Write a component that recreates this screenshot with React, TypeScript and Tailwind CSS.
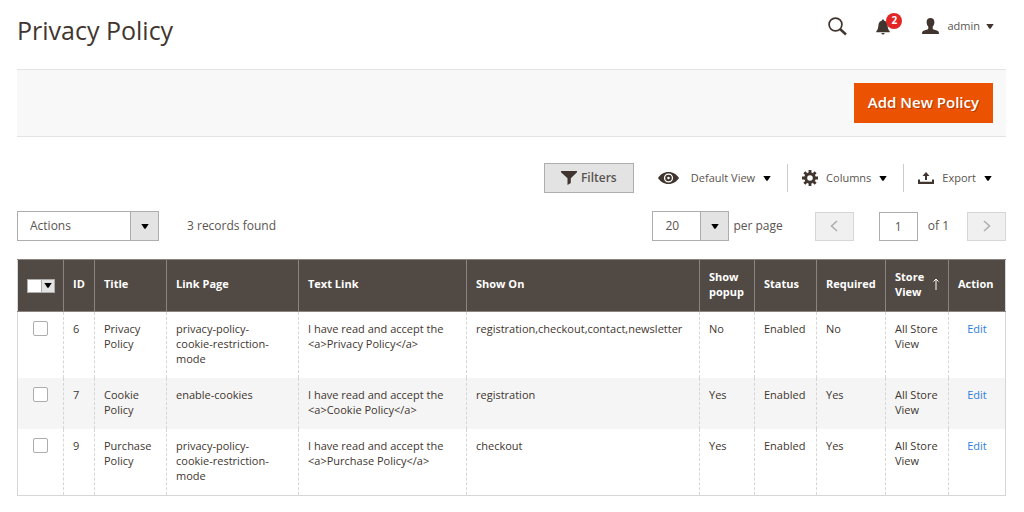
import { useState } from 'react';
import type { ReactNode } from 'react';

// ── Icons ─────────────────────────────────────────────────────────────────────

function SearchIcon() {
  return (
    <svg viewBox="0 0 20 20" fill="none" stroke="currentColor" aria-hidden="true" className="h-5 w-5">
      <circle cx="7.5" cy="8.5" r="6.4" strokeWidth="1.7" />
      <path d="M12 13l6 5.5" strokeWidth="2.4" />
    </svg>
  );
}

function BellIcon() {
  return (
    <svg viewBox="0 0 14 16" fill="currentColor" aria-hidden="true" className="h-4 w-3.5">
      <path d="M7 0.5c.8 0 1.2.5 1.2 1.2 2.2.5 3.2 2.2 3.4 4.6.2 3.2.8 4.7 2.2 6.2v.7H.2v-.7c1.4-1.5 2-3 2.2-6.2C2.6 3.9 3.6 2.2 5.8 1.7 5.8 1 6.2.5 7 .5z" />
      <path d="M5.3 14h3.4c-.2.9-.8 1.5-1.7 1.5S5.5 14.9 5.3 14z" />
    </svg>
  );
}

function UserIcon() {
  return (
    <svg viewBox="0 0 17 16" fill="currentColor" aria-hidden="true" className="h-4 w-[17px]">
      <path d="M8.5 0c2.4 0 3.9 1.5 3.9 4 0 1.9-.7 3.7-1.7 4.8v1.5c0 .6.3.9.9 1.1l3.3 1.1c1.400.5 2.1 1.3 2.1 3.5H0c0-2.200.7-3 2.1-3.5l3.3-1.100c.6-.2.9-.5.9-1.1V8.800C5.300 7.700 4.600 5.900 4.600 4c0-2.500 1.500-4 3.900-4z" />
    </svg>
  );
}

function FunnelIcon() {
  return (
    <svg viewBox="0 0 16 14" fill="currentColor" aria-hidden="true" className="h-3.5 w-4">
      <path d="M0 0h16v1.3L9.8 7.3V12L6.5 14V7.3L0 1.3z" />
    </svg>
  );
}

function EyeIcon() {
  return (
    <svg viewBox="0 0 21 12" aria-hidden="true" className="mr-1 h-3 w-[21px]">
      <path
        fill="currentColor"
        fillRule="evenodd"
        d="M10.5 0C15.2 0 18.9 2.6 21 6c-2.1 3.4-5.8 6-10.5 6S2.1 9.4 0 6c2.1-3.4 5.8-6 10.5-6zM10.5 1.4a4.6 4.6 0 1 0 0 9.2 4.6 4.6 0 0 0 0-9.2z"
      />
      <path
        fill="currentColor"
        fillRule="evenodd"
        d="M10.5 2.7a3.3 3.3 0 1 1 0 6.6 3.3 3.3 0 0 1 0-6.6zM10.5 4.7a1.3 1.3 0 1 0 0 2.6 1.3 1.3 0 0 0 0-2.6z"
      />
    </svg>
  );
}

function GearIcon() {
  return (
    <svg viewBox="0 0 16 16" fill="none" stroke="currentColor" aria-hidden="true" className="h-4 w-4">
      <circle cx="8" cy="8" r="4.3" strokeWidth="3" />
      <path
        d="M8 0v3M8 13v3M0 8h3M13 8h3M2.35 2.35l2 2M11.65 11.65l2 2M2.35 13.65l2-2M11.65 4.35l2-2"
        strokeWidth="2.8"
      />
    </svg>
  );
}

function ExportIcon() {
  return (
    <svg viewBox="0 0 16 12" fill="currentColor" aria-hidden="true" className="h-3 w-4">
      <path d="M8 0l3.5 4H9v4H7V4H4.5z" />
      <path d="M0 7.5h2v2.3h12V7.5h2V12H0z" />
    </svg>
  );
}

function CaretIcon() {
  return (
    <svg viewBox="0 0 8 5" fill="currentColor" aria-hidden="true" className="h-[5px] w-2 shrink-0">
      <path d="M0.3 0h7.4L4.6 4.7H3.4z" />
    </svg>
  );
}

function ChevronIcon({ direction }: { direction: 'left' | 'right' }) {
  return (
    <svg viewBox="0 0 8 12" fill="none" stroke="currentColor" strokeWidth="1.5" aria-hidden="true" className="h-3 w-2">
      <path d={direction === 'left' ? 'M7 1L1.5 6L7 11' : 'M1 1l5.5 5L1 11'} />
    </svg>
  );
}

// ── Data ──────────────────────────────────────────────────────────────────────

const policies = [
  {
    id: 6,
    title: 'Privacy Policy',
    linkPage: 'privacy-policy-cookie-restriction-mode',
    textLink: 'I have read and accept the <a>Privacy Policy</a>',
    showOn: 'registration,checkout,contact,newsletter',
    popup: 'No',
    status: 'Enabled',
    required: 'No',
    store: 'All Store View',
  },
  {
    id: 7,
    title: 'Cookie Policy',
    linkPage: 'enable-cookies',
    textLink: 'I have read and accept the <a>Cookie Policy</a>',
    showOn: 'registration',
    popup: 'Yes',
    status: 'Enabled',
    required: 'Yes',
    store: 'All Store View',
  },
  {
    id: 9,
    title: 'Purchase Policy',
    linkPage: 'privacy-policy-cookie-restriction-mode',
    textLink: 'I have read and accept the <a>Purchase Policy</a>',
    showOn: 'checkout',
    popup: 'Yes',
    status: 'Enabled',
    required: 'Yes',
    store: 'All Store View',
  },
];

// ── Small parts ───────────────────────────────────────────────────────────────

function ToolbarMenu({ icon, label }: { icon: ReactNode; label: string }) {
  return (
    <button
      type="button"
      className="flex h-7 items-center gap-2 pr-4 pl-3.5 text-[11px] text-[#5a5450] last:pr-3.5"
    >
      <span className="text-[#41362f]">{icon}</span>
      {label}
      <span className="text-black">
        <CaretIcon />
      </span>
    </button>
  );
}

function SelectBox({ label, options, className }: { label: string; options: string[]; className: string }) {
  return (
    <div className={`relative ${className}`}>
      <select
        aria-label={label}
        className="h-full w-full appearance-none border border-[#adadad] bg-white pr-7 pl-3 text-[#5a5450]"
      >
        {options.map((o) => (
          <option key={o}>{o}</option>
        ))}
      </select>
      <span className="pointer-events-none absolute inset-y-0 right-0 flex w-[29px] items-center justify-center border border-[#adadad] bg-[#e3e3e3] text-black">
        <CaretIcon />
      </span>
    </div>
  );
}

const headCell = 'border-l border-[#8a837f] px-[9px] pb-1 text-left font-bold first:border-l-0 first:pb-0';
const bodyCell = 'border-l border-dashed border-[#d6d6d6] pt-[9px] pb-3 pl-[9px] align-top first:border-l-0';

// ── Page ──────────────────────────────────────────────────────────────────────

export default function App() {
  const [selected, setSelected] = useState<number[]>([]);
  const [page, setPage] = useState('1');

  const toggle = (id: number) =>
    setSelected((ids) => (ids.includes(id) ? ids.filter((i) => i !== id) : [...ids, id]));

  return (
    <div className="min-h-screen bg-white pr-[18px] pb-4 pl-[17px] font-['Open_Sans',sans-serif] text-xs text-[#41362f]">
      <header className="flex h-[69px] items-start justify-between pt-3">
        <h1 className="text-[25px] leading-9">Privacy Policy</h1>
        <div className="flex h-7 items-center pr-3">
          <button type="button" aria-label="Search">
            <SearchIcon />
          </button>
          <button type="button" aria-label="Notifications" className="relative ml-7 pt-0.5">
            <BellIcon />
            <span className="absolute -top-1 left-2.5 flex h-4 w-4 items-center justify-center rounded-full bg-[#e22626] text-[10px] font-bold text-white">
              2
            </span>
          </button>
          <button type="button" className="ml-8 flex items-center gap-2 text-[11px] text-[#5a5450]">
            <span className="text-[#41362f]">
              <UserIcon />
            </span>
            <span className="flex items-center gap-1.5">
              admin
              <span className="text-[#41362f]">
                <CaretIcon />
              </span>
            </span>
          </button>
        </div>
      </header>

      <div className="flex justify-end border-y border-[#e3e3e3] bg-[#f8f8f8] px-[13px] py-[13px]">
        <button
          type="button"
          className="h-10 bg-[#eb5202] px-3.5 pb-0.5 text-[15px] font-semibold text-white [text-shadow:1px_1px_0_rgba(0,0,0,0.25)]"
        >
          Add New Policy
        </button>
      </div>

      <div className="mt-[26px] flex items-center justify-end">
        <button
          type="button"
          className="mr-2.5 flex h-[30px] w-[90px] items-center justify-center gap-1 border border-[#adadad] bg-[#e3e3e3] font-semibold text-[#5a5450]"
        >
          <span className="text-[#41362f]">
            <FunnelIcon />
          </span>
          Filters
        </button>
        <div className="flex divide-x divide-[#ccc]">
          <ToolbarMenu icon={<EyeIcon />} label="Default View" />
          <ToolbarMenu icon={<GearIcon />} label="Columns" />
          <ToolbarMenu icon={<ExportIcon />} label="Export" />
        </div>
      </div>

      <div className="mt-[18px] flex items-center justify-between text-[#5a5450]">
        <div className="flex items-center gap-7">
          <SelectBox label="Actions" options={['Actions', 'Delete', 'Edit']} className="h-[30px] w-[142px]" />
          <span>3 records found</span>
        </div>
        <div className="flex items-center">
          <SelectBox label="Records per page" options={['20', '30', '50', '100', '200']} className="h-[30px] w-[77px]" />
          <span className="ml-1">per page</span>
          <button
            type="button"
            disabled
            aria-label="Previous page"
            className="ml-8 flex h-[29px] w-[39px] items-center justify-center border border-[#d6d6d6] bg-[#f0f0f0] text-[#adadad]"
          >
            <ChevronIcon direction="left" />
          </button>
          <input
            type="text"
            aria-label="Current page"
            value={page}
            onChange={(e) => setPage(e.target.value)}
            className="mr-2.5 ml-[25px] h-[29px] w-[39px] border border-[#adadad] bg-white text-center"
          />
          <span>of 1</span>
          <button
            type="button"
            disabled
            aria-label="Next page"
            className="ml-[18px] flex h-[29px] w-[39px] items-center justify-center border border-[#d6d6d6] bg-[#f0f0f0] text-[#adadad]"
          >
            <ChevronIcon direction="right" />
          </button>
        </div>
      </div>

      <table className="mt-[18px] w-full table-fixed border-collapse border border-[#d6d6d6] text-[11px] leading-[15px]">
        <colgroup>
          <col className="w-[46px]" />
          <col className="w-[31px]" />
          <col className="w-[72px]" />
          <col className="w-[132px]" />
          <col className="w-[168px]" />
          <col />
          <col className="w-[55px]" />
          <col className="w-[62px]" />
          <col className="w-[69px]" />
          <col className="w-[63px]" />
          <col className="w-[57px]" />
        </colgroup>
        <thead>
          <tr className="h-[52px] border-y border-[#8a837f] bg-[#514943] text-white">
            <th className={headCell}>
              <button type="button" aria-label="Select rows" className="flex h-3.5 w-7 border border-[#adadad] bg-white">
                <span className="ml-auto flex h-full w-[13px] items-center justify-center border-l border-[#adadad] bg-[#e3e3e3] text-black">
                  <CaretIcon />
                </span>
              </button>
            </th>
            <th className={headCell}>ID</th>
            <th className={headCell}>Title</th>
            <th className={headCell}>Link Page</th>
            <th className={headCell}>Text Link</th>
            <th className={headCell}>Show On</th>
            <th className={headCell}>Show popup</th>
            <th className={headCell}>Status</th>
            <th className={headCell}>Required</th>
            <th className={headCell} aria-sort="ascending">
              <span className="flex items-center justify-between">
                <span className="w-8">Store View</span>
                <svg viewBox="0 0 6 12" fill="none" stroke="currentColor" aria-hidden="true" className="h-3 w-1.5">
                  <path d="M3 12V1M0.5 3.5L3 1l2.5 2.5" />
                </svg>
              </span>
            </th>
            <th className={headCell}>Action</th>
          </tr>
        </thead>
        <tbody>
          {policies.map((p) => (
            <tr key={p.id} className="even:bg-[#f5f5f5]">
              <td className={`${bodyCell} pr-[9px]`}>
                <input
                  type="checkbox"
                  aria-label={`Select ${p.title}`}
                  checked={selected.includes(p.id)}
                  onChange={() => toggle(p.id)}
                  className="mx-auto block h-[15px] w-[15px] appearance-none rounded-[2px] border border-[#adadad] bg-white checked:bg-[#514943]"
                />
              </td>
              <td className={`${bodyCell} pr-[9px]`}>{p.id}</td>
              <td className={`${bodyCell} pr-[9px]`}>{p.title}</td>
              <td className={`${bodyCell} pr-5`}>{p.linkPage}</td>
              <td className={`${bodyCell} pr-[9px]`}>{p.textLink}</td>
              <td className={`${bodyCell} pr-[9px]`}>{p.showOn}</td>
              <td className={`${bodyCell} pr-[9px]`}>{p.popup}</td>
              <td className={`${bodyCell} pr-[9px]`}>{p.status}</td>
              <td className={`${bodyCell} pr-[9px]`}>{p.required}</td>
              <td className={`${bodyCell} pr-[9px]`}>{p.store}</td>
              <td className={`${bodyCell} pr-[9px] text-center`}>
                <a href="#edit" className="text-[#2f80de]">
                  Edit
                </a>
              </td>
            </tr>
          ))}
        </tbody>
      </table>
    </div>
  );
}
